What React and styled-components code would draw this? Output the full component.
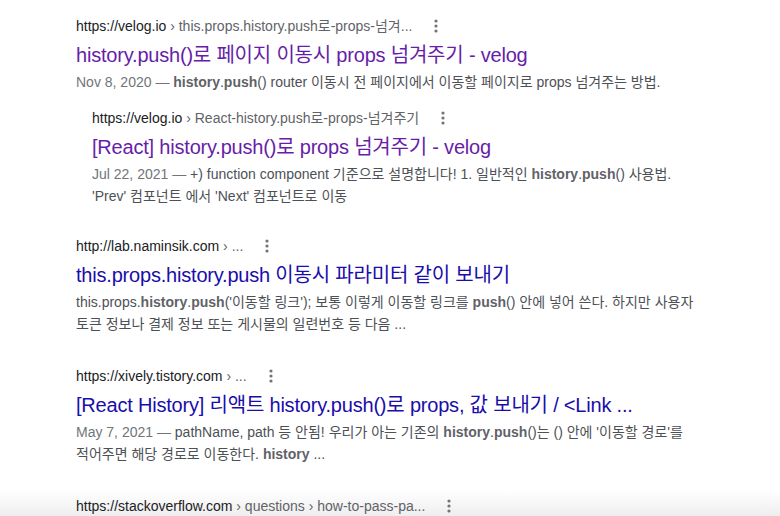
import React from 'react';
import styled, { createGlobalStyle } from 'styled-components';

const GlobalStyle = createGlobalStyle`
  html, body {
    margin: 0;
    height: 516px;
    overflow: hidden;
  }
  body {
    font-family: "Liberation Sans", Arial, "Noto Sans CJK KR", sans-serif;
    background: linear-gradient(to bottom, #fff 0, #fff 490px, #eeeeee 516px);
  }
`;

const Page = styled.div`
  padding: 15px 0 0 76px;
`;

const Result = styled.div`
  margin-bottom: ${(p) => (p.$tight ? 28 : 30)}px;
`;

const Nested = styled.div`
  margin: 14px 0 0 16px;
`;

const UrlRow = styled.div`
  display: flex;
  align-items: center;
  height: 22px;
  font-size: 14px;
  line-height: 22px;
  white-space: nowrap;
`;

const Domain = styled.span`
  color: #202124;
`;

const Path = styled.span`
  color: #5f6368;
`;

const MenuDots = styled.svg`
  margin-left: 19px;
  width: 10px;
  height: 14px;
  flex: none;
`;

const Title = styled.h3`
  margin: 5px 0 0;
  font-size: 20px;
  font-weight: 400;
  line-height: 26px;
  letter-spacing: -0.2px;
  color: ${(p) => (p.$visited ? '#681da8' : '#1a0dab')};
  white-space: nowrap;
`;

const Snippet = styled.div`
  margin-top: 3px;
  font-size: 14px;
  line-height: 22px;
  color: #4d5156;
  white-space: nowrap;

  b {
    font-weight: 700;
    color: #5f6368;
  }
`;

const Date = styled.span`
  color: #70757a;
`;

const Dots = () => (
  <MenuDots viewBox="0 0 10 14">
    <circle cx="5" cy="2" r="1.6" fill="#70757a" />
    <circle cx="5" cy="7" r="1.6" fill="#70757a" />
    <circle cx="5" cy="12" r="1.6" fill="#70757a" />
  </MenuDots>
);

const Url = ({ domain, path }) => (
  <UrlRow>
    <Domain>{domain}</Domain>
    <Path>&nbsp;› {path}</Path>
    <Dots />
  </UrlRow>
);

export default function App() {
  return (
    <Page>
      <GlobalStyle />
      <Result $tight>
        <Url domain="https://velog.io" path="this.props.history.push로-props-넘겨..." />
        <Title $visited>history.push()로 페이지 이동시 props 넘겨주기 - velog</Title>
        <Snippet>
          <Date>Nov 8, 2020 — </Date>
          <b>history</b>.<b>push</b>() router 이동시 전 페이지에서 이동할 페이지로 props 넘겨주는 방법.
        </Snippet>
        <Nested>
          <Url domain="https://velog.io" path="React-history.push로-props-넘겨주기" />
          <Title $visited>[React] history.push()로 props 넘겨주기 - velog</Title>
          <Snippet>
            <Date>Jul 22, 2021 — </Date>
            +) function component 기준으로 설명합니다! 1. 일반적인 <b>history</b>.<b>push</b>() 사용법.
            <br />
            'Prev' 컴포넌트 에서 'Next' 컴포넌트로 이동
          </Snippet>
        </Nested>
      </Result>

      <Result>
        <Url domain="http://lab.naminsik.com" path="..." />
        <Title>this.props.history.push 이동시 파라미터 같이 보내기</Title>
        <Snippet>
          this.props.<b>history</b>.<b>push</b>('이동할 링크'); 보통 이렇게 이동할 링크를 <b>push</b>() 안에 넣어 쓴다. 하지만 사용자
          <br />
          토큰 정보나 결제 정보 또는 게시물의 일련번호 등 다음 ...
        </Snippet>
      </Result>

      <Result>
        <Url domain="https://xively.tistory.com" path="..." />
        <Title>[React History] 리액트 history.push()로 props, 값 보내기 / &lt;Link ...</Title>
        <Snippet>
          <Date>May 7, 2021 — </Date>
          pathName, path 등 안됨! 우리가 아는 기존의 <b>history</b>.<b>push</b>()는 () 안에 '이동할 경로'를
          <br />
          적어주면 해당 경로로 이동한다. <b>history</b> ...
        </Snippet>
      </Result>

      <Result>
        <Url domain="https://stackoverflow.com" path="questions › how-to-pass-pa..." />
      </Result>
    </Page>
  );
}
